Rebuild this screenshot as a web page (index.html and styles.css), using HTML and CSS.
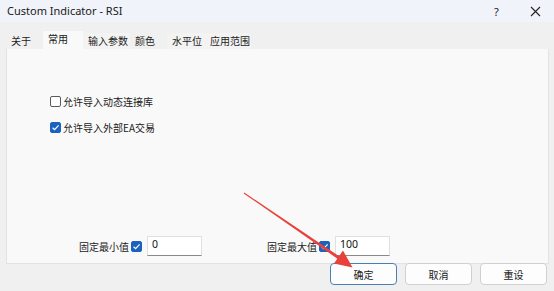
FILE: index.html
```html
<!DOCTYPE html>
<html>
<head>
<meta charset="utf-8">
<link rel="stylesheet" href="styles.css">
</head>
<body>
<div class="win">
  <div class="titlebar">
    <span class="title">Custom Indicator - RSI</span>
    <span class="help">?</span>
    <span class="close">
      <svg width="11" height="11" viewBox="0 0 11 11"><path d="M1 1 L10 10 M10 1 L1 10" stroke="#222" stroke-width="1.1" fill="none"/></svg>
    </span>
  </div>
  <div class="tabs">
    <div class="tab t1">关于</div>
    <div class="tab t2 sel">常用</div>
    <div class="tab t3">输入参数</div>
    <div class="tab t4">颜色</div>
    <div class="tab t5">水平位</div>
    <div class="tab t6">应用范围</div>
  </div>
  <div class="panel">
    <div class="checks">
      <div class="crow"><span class="cb"></span><span class="lbl">允许导入动态连接库</span></div>
      <div class="crow"><span class="cb on"><svg width="11" height="11" viewBox="0 0 11 11"><path d="M2.6 5.8 L4.6 7.7 L8.6 3.4" stroke="#fff" stroke-width="1.2" fill="none"/></svg></span><span class="lbl">允许导入外部EA交易</span></div>
    </div>
    <div class="spacer"></div>
    <div class="fixrow">
      <div class="grp g1">
        <span class="lbl">固定最小值</span>
        <span class="cb on small"><svg width="11" height="11" viewBox="0 0 11 11"><path d="M2.6 5.8 L4.6 7.7 L8.6 3.4" stroke="#fff" stroke-width="1.2" fill="none"/></svg></span>
        <span class="inp">0</span>
      </div>
      <div class="grp g2">
        <span class="lbl">固定最大值</span>
        <span class="cb on small"><svg width="11" height="11" viewBox="0 0 11 11"><path d="M2.6 5.8 L4.6 7.7 L8.6 3.4" stroke="#fff" stroke-width="1.2" fill="none"/></svg></span>
        <span class="inp">100</span>
      </div>
    </div>
  </div>
  <div class="buttons">
    <div class="btn focus">确定</div>
    <div class="btn">取消</div>
    <div class="btn">重设</div>
  </div>
  <svg class="arrow" width="554" height="291" viewBox="0 0 554 291">
    <polygon points="243.7,193.4 244.3,192.6 341.2,257.6 339.6,260.2" fill="#e8403a"/>
    <polygon points="352.5,267.5 334,263.5 343,250.5" fill="#e8403a"/>
  </svg>
</div>
</body>
</html>
```
FILE: styles.css
```css
* { box-sizing: border-box; }
html, body { margin: 0; padding: 0; }
body {
  width: 554px;
  height: 291px;
  overflow: hidden;
  background: #f0f0f0;
  font-family: "Noto Sans", "Noto Sans CJK SC", sans-serif;
  color: #1a1a1a;
}
.win {
  position: relative;
  width: 554px;
  height: 291px;
  display: flex;
  flex-direction: column;
}
.titlebar {
  height: 22px;
  background: #f0f3f9;
  display: flex;
  align-items: center;
  padding-left: 7px;
}
.title {
  font-size: 11px;
  flex: 1;
  color: #1a1a1a;
  padding-bottom: 2px;
}
.help {
  font-size: 11px;
  width: 12px;
  margin-right: 24px;
  color: #222;
}
.close {
  width: 11px;
  height: 11px;
  margin-right: 13px;
  display: flex;
}
.tabs {
  display: flex;
  align-items: flex-end;
  margin-top: 9px;
  padding-left: 6px;
  height: 18px;
  font-family: "Noto Sans CJK SC", sans-serif;
  font-size: 10px;
}
.tab {
  height: 16px;
  line-height: 15px;
  padding-left: 5px;
  background: #f0f0f0;
  color: #222;
}
.t1 { width: 37px; }
.t2 { width: 40px; }
.t3 { width: 47px; background: #f3f3f3; }
.t4 { width: 37px; }
.t5 { width: 38px; background: #f3f3f3; }
.t6 { width: 46px; background: #f3f3f3; }
.tab.sel {
  height: 18px;
  line-height: 16px;
  background: #f9f9f9;
  padding-left: 5px;
}
.panel {
  margin-left: 6px;
  margin-right: 5px;
  height: 215px;
  background: #f9f9f9;
  border: 1px solid #e3e3e3;
  border-top: none;
  display: flex;
  flex-direction: column;
  font-family: "Noto Sans CJK SC", sans-serif;
  font-size: 10px;
}
.checks {
  margin-top: 47px;
  padding-left: 43px;
  display: flex;
  flex-direction: column;
  gap: 15px;
}
.crow {
  display: flex;
  align-items: center;
  height: 11px;
}
.cb {
  width: 11px;
  height: 11px;
  border: 1px solid #5a5a5a;
  border-radius: 2px;
  background: #fff;
  display: flex;
  align-items: center;
  justify-content: center;
  flex: none;
}
.cb.on {
  background: #1b62bf;
  border-color: #1b62bf;
}
.cb svg { display: block; margin: -1px; }
.crow .lbl { margin-left: 2px; color: #1a1a1a; }
.spacer { flex: 1; }
.fixrow {
  display: flex;
  padding-left: 72px;
  margin-bottom: 7px;
}
.grp {
  display: flex;
  align-items: center;
}
.g1 { width: 188px; }
.grp .lbl { width: 50px; margin-right: 2px; color: #1a1a1a; }
.inp {
  width: 55px;
  height: 20px;
  margin-left: 5px;
  background: #fff;
  border: 1px solid #e0e0e0;
  border-bottom: 1px solid #8a8a8a;
  font-family: "Noto Sans", sans-serif;
  font-size: 10.5px;
  line-height: 13px;
  padding-left: 4px;
  padding-top: 1px;
  color: #111;
}
.buttons {
  display: flex;
  justify-content: flex-end;
  gap: 8px;
  padding-right: 7px;
  margin-top: -1px;
}
.btn {
  width: 67px;
  height: 22px;
  border: 1px solid #d0d0d0;
  border-radius: 4px;
  background: #fdfdfd;
  font-family: "Noto Sans CJK SC", sans-serif;
  font-size: 10px;
  display: flex;
  align-items: center;
  justify-content: center;
  color: #1a1a1a;
}
.btn.focus {
  border-color: #4a7fb5;
}
.arrow {
  position: absolute;
  left: 0;
  top: 0;
  pointer-events: none;
}
```
